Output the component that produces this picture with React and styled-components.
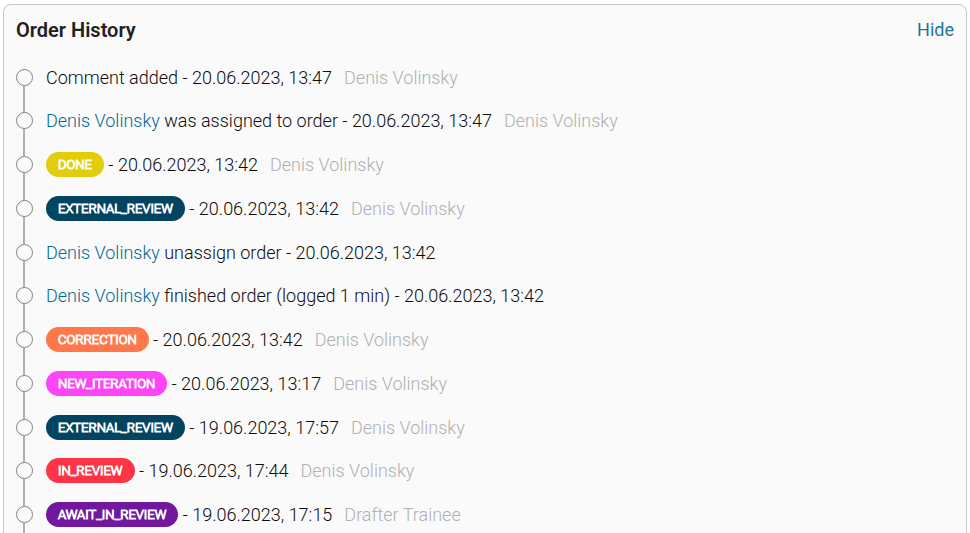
import React from "react";
import styled, { createGlobalStyle } from "styled-components";

const GlobalStyle = createGlobalStyle`
  *, *::before, *::after { box-sizing: border-box; }
  html { scrollbar-width: none; }
  body {
    margin: 0;
    background: #ffffff;
    color: #0c0c0c;
    font-family: Roboto, "Liberation Sans", sans-serif;
    font-size: 18px;
    font-weight: 300;
    line-height: 26px;
  }
`;

const Panel = styled.section`
  margin: 4px 3px;
  padding: 12px;
  border: 1px solid #c8c8c8;
  border-radius: 8px;
  background: #fafafa;
`;

const Header = styled.header`
  display: flex;
  align-items: center;
  justify-content: space-between;
  margin-bottom: 22px;
`;

const Title = styled.h2`
  margin: 0;
  color: #212121;
  font-size: 20px;
  font-weight: 600;
`;

const HideButton = styled.button`
  padding: 0;
  border: 0;
  background: none;
  color: #1f7599;
  font: inherit;
  font-weight: 400;
  cursor: pointer;
`;

const Timeline = styled.ol`
  margin: 0;
  padding: 0;
  list-style: none;
`;

const Entry = styled.li`
  display: flex;
  gap: 13px;
  height: 44px;

  &:nth-child(4n + 1) {
    height: 43px;
  }
`;

const Track = styled.span`
  display: flex;
  flex-direction: column;
  padding-top: 4px;
  margin-bottom: -4px;

  &::before {
    content: "";
    flex: none;
    width: 17px;
    height: 17px;
    border: 1px solid #808080;
    border-radius: 50%;
  }

  &::after {
    content: "";
    flex: 1;
    width: 2px;
    margin-left: 7px;
    background: #b0b0b0;
  }
`;

const Line = styled.div`
  display: flex;
  align-items: center;
  height: 26px;
  white-space: pre;
`;

const Person = styled.a`
  color: #006a94;
  text-decoration: none;
`;

const Author = styled.span`
  margin-left: 12px;
  color: #b0b0b0;
`;

const Badge = styled.span`
  align-self: flex-start;
  padding: 0 12px;
  border-radius: 13px;
  background: ${(p) => p.$color};
  color: #ffffff;
  font-size: 13px;
  font-weight: 300;
  line-height: 25px;
  -webkit-text-stroke: 1px #ffffff;
`;

const statusColors = {
  DONE: "#e2cd09",
  EXTERNAL_REVIEW: "#034561",
  CORRECTION: "#ff784c",
  NEW_ITERATION: "#ff43f6",
  IN_REVIEW: "#ff3547",
  AWAIT_IN_REVIEW: "#72189e",
};

const entries = [
  { text: "Comment added", date: "20.06.2023, 13:47", author: "Denis Volinsky" },
  { person: "Denis Volinsky", text: " was assigned to order", date: "20.06.2023, 13:47", author: "Denis Volinsky" },
  { status: "DONE", date: "20.06.2023, 13:42", author: "Denis Volinsky" },
  { status: "EXTERNAL_REVIEW", date: "20.06.2023, 13:42", author: "Denis Volinsky" },
  { person: "Denis Volinsky", text: " unassign order", date: "20.06.2023, 13:42" },
  { person: "Denis Volinsky", text: " finished order (logged 1 min)", date: "20.06.2023, 13:42" },
  { status: "CORRECTION", date: "20.06.2023, 13:42", author: "Denis Volinsky" },
  { status: "NEW_ITERATION", date: "20.06.2023, 13:17", author: "Denis Volinsky" },
  { status: "EXTERNAL_REVIEW", date: "19.06.2023, 17:57", author: "Denis Volinsky" },
  { status: "IN_REVIEW", date: "19.06.2023, 17:44", author: "Denis Volinsky" },
  { status: "AWAIT_IN_REVIEW", date: "19.06.2023, 17:15", author: "Drafter Trainee" },
];

export default function App() {
  return (
    <>
      <GlobalStyle />
      <Panel aria-labelledby="history-title">
        <Header>
          <Title id="history-title">Order History</Title>
          <HideButton type="button">Hide</HideButton>
        </Header>
        <Timeline>
          {entries.map((entry, i) => (
            <Entry key={i}>
              <Track aria-hidden="true" />
              <Line>
                {entry.status && <Badge $color={statusColors[entry.status]}>{entry.status}</Badge>}
                {entry.person && <Person href="#">{entry.person}</Person>}
                <span>{`${entry.text ?? ""} - ${entry.date}`}</span>
                {entry.author && <Author>{entry.author}</Author>}
              </Line>
            </Entry>
          ))}
        </Timeline>
      </Panel>
    </>
  );
}
